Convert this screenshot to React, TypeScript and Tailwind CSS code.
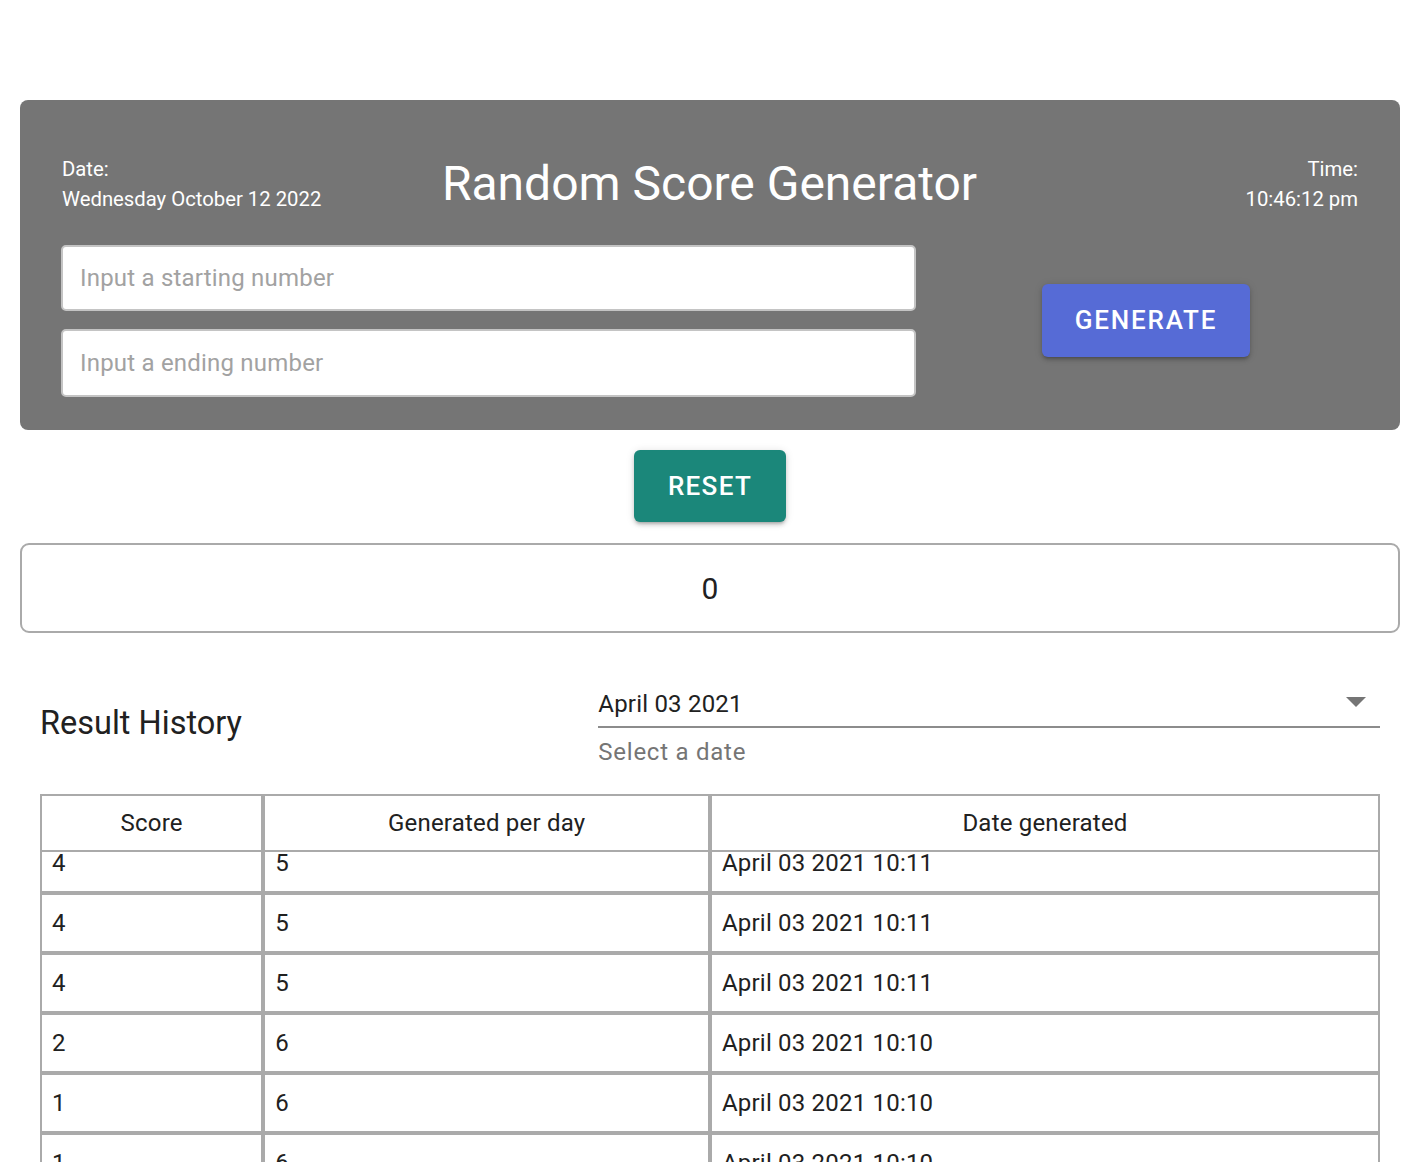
import React from "react";

const rows = [
  ["4", "5", "April 03 2021 10:11"],
  ["4", "5", "April 03 2021 10:11"],
  ["4", "5", "April 03 2021 10:11"],
  ["2", "6", "April 03 2021 10:10"],
  ["1", "6", "April 03 2021 10:10"],
  ["1", "6", "April 03 2021 10:10"],
  ["1", "6", "April 03 2021 10:10"],
];

export default function App() {
  return (
    <div
      className="min-h-screen bg-white text-[#212121] pt-[100px] px-[20px]"
      style={{ fontFamily: "Roboto, 'Liberation Sans', sans-serif" }}
    >
      {/* Top panel */}
      <div className="bg-[#757575] rounded-[8px] pl-[41px] pr-[42px] pt-[54px] pb-[33px] text-white">
        <div className="grid grid-cols-[1fr_auto_1fr] items-center">
          <div className="text-[20.3px] leading-[30px] pl-[1px]">
            <div>Date:</div>
            <div>Wednesday October 12 2022</div>
          </div>
          <h1 className="text-[48px] leading-[58px] font-normal">Random Score Generator</h1>
          <div className="text-[20.3px] leading-[30px] text-right">
            <div>Time:</div>
            <div>10:46:12 pm</div>
          </div>
        </div>
        <div className="flex items-center mt-[31px]">
          <div className="w-[855px] flex flex-col gap-[18px]">
            <div className="h-[66px] bg-white border-2 border-[#c4c4c4] rounded-[5px] flex items-center pl-[17px] text-[24px] text-[#a2a2a2] tracking-[0.2px]">
              Input a starting number
            </div>
            <div className="h-[68px] bg-white border-2 border-[#c4c4c4] rounded-[5px] flex items-center pl-[17px] text-[24px] text-[#a2a2a2] tracking-[0.2px]">
              Input a ending number
            </div>
          </div>
          <div className="flex-1 flex justify-center pl-[18px]">
            <button className="w-[208px] h-[73px] -mt-[2px] bg-[#566bd6] rounded-[6px] text-white text-[26px] font-medium tracking-[1.8px] shadow-[0_3px_3px_-2px_rgba(0,0,0,0.2),0_3px_4px_0_rgba(0,0,0,0.14),0_1px_8px_0_rgba(0,0,0,0.12)]">
              GENERATE
            </button>
          </div>
        </div>
      </div>

      {/* Reset */}
      <div className="flex justify-center mt-[20px]">
        <button className="w-[152px] h-[72px] bg-[#1b877a] rounded-[6px] text-white text-[26px] font-medium tracking-[1.3px] shadow-[0_3px_3px_-2px_rgba(0,0,0,0.2),0_3px_4px_0_rgba(0,0,0,0.14),0_1px_8px_0_rgba(0,0,0,0.12)]">
          RESET
        </button>
      </div>

      {/* Result */}
      <div className="mt-[21px] h-[90px] border-2 border-[#aaaaaa] rounded-[9px] flex items-center justify-center text-[30px]">
        0
      </div>

      {/* History */}
      <div className="px-[20px] mt-[55px]">
        <div className="grid grid-cols-12 items-start">
          <div className="col-span-5 text-[32.5px] leading-[36px] mt-[17px]">Result History</div>
          <div className="col-span-7">
            <div className="flex items-start justify-between border-b-2 border-[#8c8c8c] h-[40px]">
              <span className="text-[24px] leading-[32px] tracking-[0.2px]">April 03 2021</span>
              <svg width="20" height="10" viewBox="0 0 20 10" className="mr-[14px] mt-[9px]">
                <polygon points="0,0 20,0 10,10" fill="#757575" />
              </svg>
            </div>
            <div className="text-[24px] tracking-[0.75px] text-[#757575] mt-[9px] leading-[30px]">
              Select a date
            </div>
          </div>
        </div>

        {/* Table */}
        <div className="mt-[27px] text-[24px] tracking-[0.2px]">
          <div className="grid grid-cols-[1fr_2fr_3fr]">
            {["Score", "Generated per day", "Date generated"].map((h) => (
              <div
                key={h}
                className="h-[58px] border-2 border-[#aaaaaa] flex items-center justify-center"
              >
                {h}
              </div>
            ))}
          </div>
          <div className="h-[420px] overflow-hidden">
            <div className="-mt-[19px]">
              {rows.map((r, i) => (
                <div key={i} className="grid grid-cols-[1fr_2fr_3fr]">
                  {r.map((c, j) => (
                    <div
                      key={j}
                      className="h-[60px] border-2 border-[#aaaaaa] flex items-center pl-[10px]"
                    >
                      {c}
                    </div>
                  ))}
                </div>
              ))}
            </div>
          </div>
        </div>
      </div>
    </div>
  );
}
